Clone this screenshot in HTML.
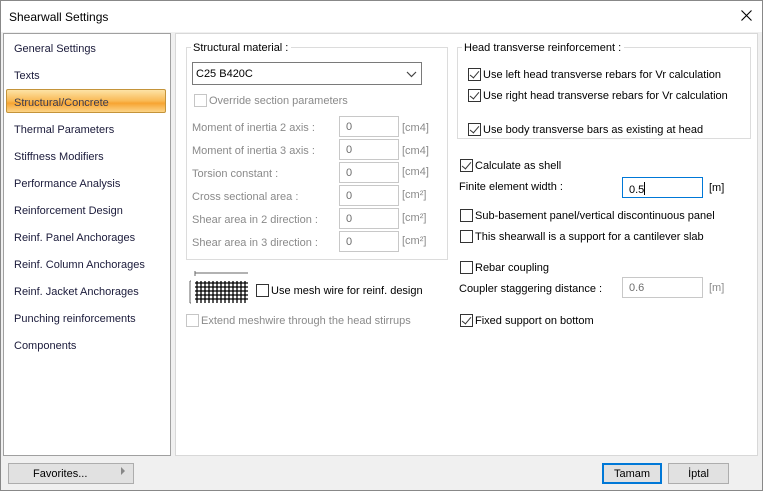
<!DOCTYPE html>
<html><head><meta charset="utf-8"><style>
*{box-sizing:border-box;margin:0;padding:0}
body{width:763px;height:491px;background:#f0f0f0;font-family:"Liberation Sans",sans-serif;font-size:11px;color:#000;position:relative;overflow:hidden}
.a{position:absolute;white-space:nowrap}
.s{margin-top:2px}
.t{background:#fff}
.li{position:absolute;left:14px;color:#1a1a3a;font-size:11px;margin-top:2px}
.dis{color:#8a8a8a}
.inp{position:absolute;background:#fff;border:1px solid #c8c8c8;height:21px;padding:4px 0 0 6px;color:#6d6d6d}
.cb{position:absolute;width:13px;height:13px;border:1px solid #333;background:#fff;margin-top:1px}
.cb.dis{border-color:#c6c6c6}
.cb.ck::after{content:"";position:absolute;left:3px;top:0px;width:4px;height:8px;border:solid #333;border-width:0 1.5px 1.5px 0;transform:rotate(40deg)}
.btn{position:absolute;border:1px solid #adadad;background:#e1e1e1;height:21px;text-align:center;padding-top:4px}
</style></head><body>
<div class="a t" style="left:0;top:0;width:763px;height:32px;border:1px solid #888;border-bottom:none"></div>
<div class="a" style="left:9px;top:10px;font-size:12px">Shearwall Settings</div>
<svg class="a" style="left:741px;top:10px" width="11" height="11"><path d="M0.5 0.5L10.5 10.5M10.5 0.5L0.5 10.5" stroke="#000" stroke-width="1.1"/></svg>
<div class="a" style="left:0;top:32px;width:1px;height:459px;background:#888"></div>
<div class="a" style="left:762px;top:32px;width:1px;height:459px;background:#888"></div>

<div class="a t" style="left:3px;top:33px;width:168px;height:423px;border:1px solid #a0a0a0"></div>
<div class="a" style="left:6px;top:89px;width:160px;height:24px;border:1px solid #c4943a;border-radius:2px;background:linear-gradient(#fde3a6,#f9b954 50%,#f7a432 60%,#fcd487)"></div>
<div class="li" style="top:41px">General Settings</div>
<div class="li" style="top:68px">Texts</div>
<div class="li" style="top:95px;color:#3c3c50">Structural/Concrete</div>
<div class="li" style="top:122px">Thermal Parameters</div>
<div class="li" style="top:149px">Stiffness Modifiers</div>
<div class="li" style="top:176px">Performance Analysis</div>
<div class="li" style="top:203px">Reinforcement Design</div>
<div class="li" style="top:230px">Reinf. Panel Anchorages</div>
<div class="li" style="top:257px">Reinf. Column Anchorages</div>
<div class="li" style="top:284px">Reinf. Jacket Anchorages</div>
<div class="li" style="top:311px">Punching reinforcements</div>
<div class="li" style="top:338px">Components</div>

<div class="a t" style="left:175px;top:33px;width:583px;height:423px;border:1px solid #d8d8d8"></div>

<div class="a" style="left:186px;top:47px;width:262px;height:213px;border:1px solid #dcdcdc"></div>
<div class="a t s" style="left:191px;top:40px;padding:0 3px 0 2px">Structural material :</div>
<div class="a" style="left:192px;top:62px;width:230px;height:23px;border:1px solid #7a7a7a;background:#fff;padding:5px 0 0 3px">C25 B420C</div>
<svg class="a" style="left:406px;top:71px" width="11" height="7"><path d="M1 1l4.5 4.5L10 1" fill="none" stroke="#444" stroke-width="1.2"/></svg>
<div class="cb dis" style="left:194px;top:93px"></div>
<div class="a dis s" style="left:209px;top:93px">Override section parameters</div>
<div class="a dis s" style="left:192px;top:120px">Moment of inertia 2 axis :</div>
<div class="a dis s" style="left:192px;top:143px">Moment of inertia 3 axis :</div>
<div class="a dis s" style="left:192px;top:166px">Torsion constant :</div>
<div class="a dis s" style="left:192px;top:189px">Cross sectional area :</div>
<div class="a dis s" style="left:192px;top:212px">Shear area in 2 direction :</div>
<div class="a dis s" style="left:192px;top:235px">Shear area in 3 direction :</div>
<div class="inp" style="left:339px;top:116px;width:60px">0</div>
<div class="inp" style="left:339px;top:139px;width:60px">0</div>
<div class="inp" style="left:339px;top:162px;width:60px">0</div>
<div class="inp" style="left:339px;top:185px;width:60px">0</div>
<div class="inp" style="left:339px;top:208px;width:60px">0</div>
<div class="inp" style="left:339px;top:231px;width:60px">0</div>
<div class="a dis s" style="left:402px;top:120px">[cm4]</div>
<div class="a dis s" style="left:402px;top:143px">[cm4]</div>
<div class="a dis s" style="left:402px;top:164px">[cm4]</div>
<div class="a dis s" style="left:402px;top:187px">[cm²]</div>
<div class="a dis s" style="left:402px;top:210px">[cm²]</div>
<div class="a dis s" style="left:402px;top:233px">[cm²]</div>

<svg class="a" style="left:186px;top:270px" width="62" height="36">
<path d="M9 3h56M9 1v5M64 1v5M4 11h1M4 33h1M4 11v22" stroke="#666" fill="none"/>
<g stroke="#000" stroke-width="1.3">
<path d="M11 11v22M15 11v22M19 11v22M23 11v22M27 11v22M31 11v22M35 11v22M39 11v22M43 11v22M47 11v22M51 11v22M55 11v22M59 11v22"/>
<path d="M9 13h53M9 17h53M9 21h53M9 25h53M9 29h53"/>
</g></svg>
<div class="cb" style="left:256px;top:283px"></div>
<div class="a s" style="left:271px;top:283px">Use mesh wire for reinf. design</div>
<div class="cb dis" style="left:186px;top:313px"></div>
<div class="a dis s" style="left:201px;top:313px">Extend meshwire through the head stirrups</div>

<div class="a" style="left:457px;top:47px;width:294px;height:92px;border:1px solid #dcdcdc"></div>
<div class="a t s" style="left:462px;top:40px;padding:0 3px 0 2px">Head transverse reinforcement :</div>
<div class="cb ck" style="left:468px;top:67px"></div>
<div class="a s" style="left:483px;top:67px">Use left head transverse rebars for Vr calculation</div>
<div class="cb ck" style="left:468px;top:88px"></div>
<div class="a s" style="left:483px;top:88px">Use right head transverse rebars for Vr calculation</div>
<div class="cb ck" style="left:468px;top:122px"></div>
<div class="a s" style="left:483px;top:122px">Use body transverse bars as existing at head</div>

<div class="cb ck" style="left:460px;top:158px"></div>
<div class="a s" style="left:475px;top:158px">Calculate as shell</div>
<div class="a s" style="left:459px;top:179px">Finite element width :</div>
<div class="inp" style="left:622px;top:177px;width:81px;border:1px solid #0078d7;color:#000">0.5<span style="display:inline-block;width:1px;height:13px;background:#000;vertical-align:-2px"></span></div>
<div class="a s" style="left:709px;top:180px">[m]</div>
<div class="cb" style="left:460px;top:208px"></div>
<div class="a s" style="left:475px;top:208px">Sub-basement panel/vertical discontinuous panel</div>
<div class="cb" style="left:460px;top:229px"></div>
<div class="a s" style="left:475px;top:229px">This shearwall is a support for a cantilever slab</div>
<div class="cb" style="left:460px;top:260px"></div>
<div class="a s" style="left:475px;top:260px">Rebar coupling</div>
<div class="a s" style="left:459px;top:281px">Coupler staggering distance :</div>
<div class="inp" style="left:622px;top:277px;width:81px">0.6</div>
<div class="a dis s" style="left:709px;top:280px">[m]</div>
<div class="cb ck" style="left:460px;top:313px"></div>
<div class="a s" style="left:475px;top:313px">Fixed support on bottom</div>

<div class="btn" style="left:8px;top:463px;width:126px;text-align:left;padding-left:24px">Favorites...</div>
<div class="a" style="left:121px;top:467px;width:0;height:0;border-left:4px solid #888;border-top:4px solid transparent;border-bottom:4px solid transparent"></div>
<div class="btn" style="left:602px;top:463px;width:60px;border:2px solid #0078d7;padding-top:3px">Tamam</div>
<div class="btn" style="left:668px;top:463px;width:61px">İptal</div>
<div class="a" style="left:0;top:490px;width:763px;height:1px;background:#888"></div>
</body></html>
